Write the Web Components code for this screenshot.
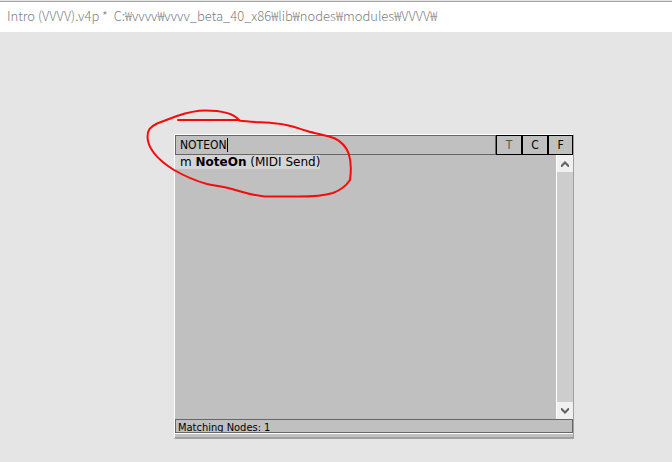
<!DOCTYPE html>
<html lang="en">
<head>
<meta charset="utf-8">
<title>Intro (VVVV).v4p</title>
<style>
  html, body { height: 100%; margin: 0; }
  body { background: #e5e5e5; overflow: hidden; color: #000; font-family: "DejaVu Sans", sans-serif; }
</style>
</head>
<body>
<patch-window></patch-window>

<template id="title-bar">
  <style>
    :host { display: block; box-sizing: border-box; height: 32px; padding: 2px 7px 0; background: linear-gradient(#e5e5e5 1px, #a5a5a5 1px 2px, #fff 2px); color: #808080; }
    h1 { margin: 0; font: 300 13px/28px "Noto Sans CJK KR", sans-serif; white-space: pre; }
  </style>
  <h1><slot></slot></h1>
</template>

<template id="toggle-button">
  <style>
    :host { display: block; width: 26px; }
    :host(:last-of-type) { width: 25px; }
    button { display: block; box-sizing: border-box; width: 100%; height: 20px; padding: 0; border: 1px solid #000; background: #c0c0c0; color: inherit; font: 12px/18px "DejaVu Sans Condensed", "DejaVu Sans", sans-serif; }
    :host([dim]) { color: #555; }
  </style>
  <button type="button"><slot></slot></button>
</template>

<template id="search-field">
  <style>
    :host { display: flex; align-items: center; flex: 1; min-width: 0; box-sizing: border-box; height: 20px; padding: 0 4px; border: 1px solid #666; background: #c0c0c0; }
    input { field-sizing: content; padding: 0; border: 0; outline: 0; background: none; color: #000; font: 12px/16px "DejaVu Sans Condensed", "DejaVu Sans", sans-serif; }
    i { width: 1px; height: 14px; background: #000; }
  </style>
  <input type="text" aria-label="Search nodes" value="NOTEON"><i></i>
</template>

<template id="node-item">
  <style>
    :host { display: block; }
    button { display: block; padding: 1px 0 0 5px; border: 0; background: #d5d5d5; color: #000; font: 12px/13px "DejaVu Sans", sans-serif; white-space: pre; }
  </style>
  <button type="button"><slot></slot></button>
</template>

<template id="scroll-strip">
  <style>
    :host { display: flex; flex-direction: column; width: 16px; border-left: 1px solid #fff; background: #f0f0f0; }
    button { display: grid; place-items: center; height: 17px; padding: 0; border: 0; background: #f0f0f0; }
    div { flex: 1; background: #cdcdcd; }
    svg { display: block; width: 8px; height: 6px; fill: #606060; }
  </style>
  <button type="button" aria-label="Scroll up"><svg viewBox="0 0 8 6"><path d="M4 0 8 4V6H7L4 3 1 6H0V4Z"/></svg></button>
  <div></div>
  <button type="button" aria-label="Scroll down"><svg viewBox="0 0 8 6"><path d="M4 6 0 2V0H1L4 3 7 0H8V2Z"/></svg></button>
</template>

<template id="status-line">
  <style>
    :host { display: block; box-sizing: border-box; height: 14px; padding-left: 2px; border: 1px solid #666; background: #c0c0c0; font: 11px/15px "DejaVu Sans Condensed", "DejaVu Sans", sans-serif; overflow: hidden; white-space: nowrap; }
  </style>
  <slot></slot>
</template>

<template id="node-browser">
  <style>
    :host { display: flex; flex-direction: column; box-sizing: border-box; border: solid; border-width: 1px 1px 2px; border-color: #fff #a0a0a0 #a0a0a0 #fff; background: #c0c0c0; }
    .search, .list { display: flex; }
    .list { flex: 1; min-height: 0; }
    .items { flex: 1; min-width: 0; }
    .grip { height: 4px; box-sizing: border-box; border-top: 1px solid #fff; }
  </style>
  <div class="search">
    <search-field></search-field>
    <toggle-button dim>T</toggle-button><toggle-button>C</toggle-button><toggle-button>F</toggle-button>
  </div>
  <div class="list">
    <div class="items"><slot></slot></div>
    <scroll-strip></scroll-strip>
  </div>
  <slot name="status"></slot>
  <div class="grip"></div>
</template>

<template id="pen-mark">
  <style>
    :host { position: absolute; left: -32px; top: -29px; pointer-events: none; }
    svg { display: block; width: 214px; height: 98px; fill: none; stroke: #f80a0a; stroke-width: 2; stroke-linecap: round; stroke-linejoin: round; }
  </style>
  <svg viewBox="142 105 214 98" aria-hidden="true"><path d="M178 120H239C234 114 222 110.500 205 110.500C195 110.500 186 113 177 116L157 123.500C150 127 147.500 130 147.500 137C148 150 158 160 174 170C188 178 196 181 207 184C216 186 222 186.500 230 188.500C243 192 252 195.500 265 196.500H290C310 197 323 196 333 193C341 190 346 186 350 180C351.500 169 351 160 348.500 153C346 147 342 142 335 138.500C326 135 317 134 307 131C297 128 289 124.500 277 123.500C264 122 253 122.500 239 120.500"/></svg>
</template>

<template id="patch-window">
  <style>
    :host { display: flex; flex-direction: column; height: 100%; }
    main { flex: 1; min-height: 0; display: flex; box-sizing: border-box; padding: 102px 98px 23px 174px; }
    .stage { position: relative; flex: 1; min-width: 0; display: flex; }
    node-browser { flex: 1; min-width: 0; }
  </style>
  <title-bar>Intro (VVVV).v4p *  C:₩vvvv₩vvvv_beta_40_x86₩lib₩nodes₩modules₩VVVV₩</title-bar>
  <main>
    <div class="stage">
      <node-browser>
        <node-item>m <b>NoteOn</b> (MIDI Send)</node-item>
        <status-line slot="status">Matching Nodes: 1</status-line>
      </node-browser>
      <pen-mark></pen-mark>
    </div>
  </main>
</template>

<script>
  class TemplateElement extends HTMLElement {
    constructor() {
      super();
      const template = document.getElementById(this.localName);
      this.attachShadow({ mode: "open" }).append(document.importNode(template.content, true));
    }
  }
  for (const name of ["title-bar", "toggle-button", "search-field", "node-item", "scroll-strip", "status-line", "node-browser", "pen-mark", "patch-window"]) {
    customElements.define(name, class extends TemplateElement {});
  }
</script>
</body>
</html>
